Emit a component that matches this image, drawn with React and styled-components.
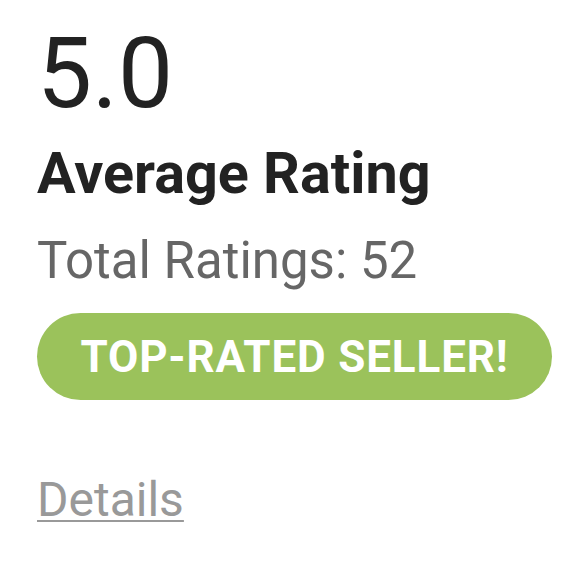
import React from "react";
import styled, { createGlobalStyle } from "styled-components";

const GlobalStyle = createGlobalStyle`
  html, body {
    margin: 0;
    padding: 0;
    background: #ffffff;
  }
  body {
    font-family: Roboto, "Liberation Sans", sans-serif;
  }
`;

const Card = styled.div`
  display: flex;
  flex-direction: column;
  align-items: flex-start;
  padding: 25px 0 0 37px;
  width: 580px;
  box-sizing: border-box;
`;

const Score = styled.div`
  font-size: 98px;
  font-weight: 400;
  line-height: 1;
  color: #222222;
`;

const Title = styled.h2`
  margin: 16px 0 0 0;
  font-size: 57.5px;
  font-weight: 700;
  line-height: 1.2;
  color: #222222;
`;

const Total = styled.div`
  margin-top: 22px;
  font-size: 51px;
  line-height: 1.2;
  color: #666666;
`;

const Badge = styled.div`
  margin-top: 22px;
  height: 87px;
  width: 515px;
  border-radius: 44px;
  background: #9bc25b;
  color: #ffffff;
  font-size: 44px;
  font-weight: 700;
  letter-spacing: 0.85px;
  display: flex;
  align-items: center;
  justify-content: center;
  text-transform: uppercase;
`;

const DetailsLink = styled.a`
  margin-top: 71px;
  font-size: 48px;
  line-height: 1.2;
  color: #999999;
  text-decoration: underline;
  text-decoration-thickness: 2px;
  text-underline-offset: 4px;
  cursor: pointer;
`;

export default function App() {
  return (
    <>
      <GlobalStyle />
      <Card>
        <Score>5.0</Score>
        <Title>Average Rating</Title>
        <Total>Total Ratings: 52</Total>
        <Badge>Top-Rated Seller!</Badge>
        <DetailsLink>Details</DetailsLink>
      </Card>
    </>
  );
}
